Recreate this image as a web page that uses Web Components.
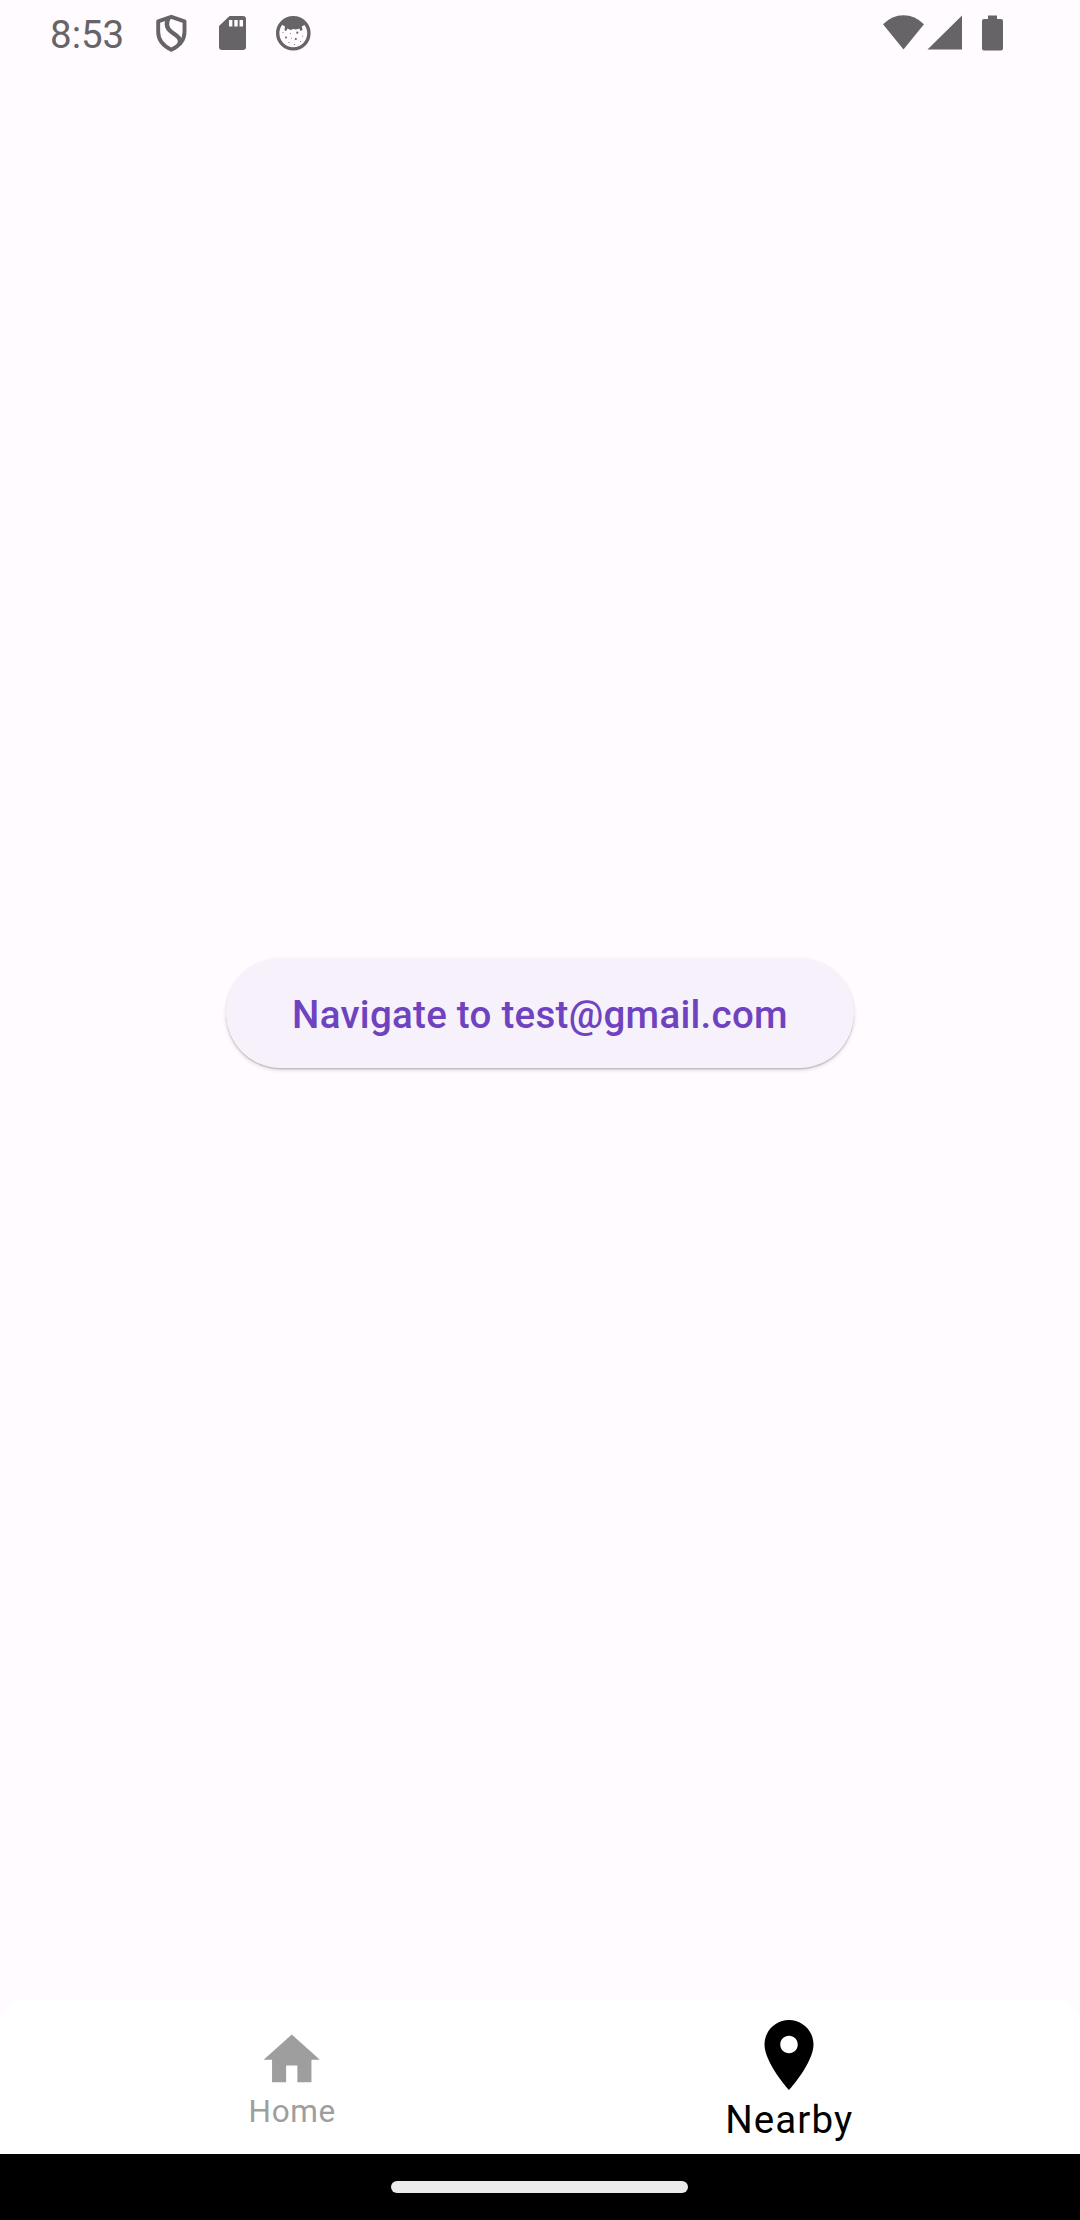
<!DOCTYPE html>
<html lang="en">
<head>
<meta charset="utf-8">
<title>Nearby</title>
<style>
html,body{margin:0;height:2220px;background:#fffbff}
body{font-family:Roboto,"Liberation Sans",sans-serif}
</style>
</head>
<body>
<app-screen>
  <status-bar slot="top">8:53</status-bar>
  <pill-button>Navigate to test@gmail.com</pill-button>
  <nav-bar slot="bottom">
    <nav-item icon="home">Home</nav-item>
    <nav-item icon="pin" active>Nearby</nav-item>
  </nav-bar>
  <gesture-bar slot="bottom"></gesture-bar>
</app-screen>
<script>
function define(name, html) {
  customElements.define(name, class extends HTMLElement {
    constructor() {
      super();
      this.attachShadow({mode: 'open'}).innerHTML = html;
    }
  });
}

define('app-screen', `
<style>
:host{display:flex;flex-direction:column;width:1080px;height:2220px;background:#fffbff;overflow:hidden}
main{flex:1;display:flex;justify-content:center;align-items:flex-start;padding-top:892px}
</style>
<slot name="top"></slot><main><slot></slot></main><slot name="bottom"></slot>`);

define('status-bar', `
<style>
:host{display:flex;height:66px;box-sizing:border-box;color:#676468;font-size:38.5px;line-height:70px}
.time{margin-left:50px;width:105px;white-space:nowrap}
svg{display:block;flex:none}
.end{margin-left:auto}
</style>
<span class="time"><slot></slot></span>
<svg width="165" height="66" viewBox="155 0 165 66" fill="#676468">
  <path d="M171.300 16.800L184.500 21.300V32C184.500 40 179 46 171.300 49.700C163.600 46 158.200 40 158.200 32V21.300Z" fill="none" stroke="#676468" stroke-width="3.900" stroke-linejoin="round"/>
  <path d="M168.500 18C165.500 24 166.500 28.500 171.500 32C178 36.500 181.500 38.500 179.500 44.500" fill="none" stroke="#676468" stroke-width="4.300"/>
  <path fill-rule="evenodd" d="M229.500 16H243Q246 16 246 19V47Q246 50 243 50H222Q219 50 219 47V26ZM229 20V26.500H232.400V20ZM234.300 20V26.500H237.700V20ZM239.500 20V26.500H243V20Z"/>
  <circle cx="293.300" cy="33.300" r="15.600" fill="#fffbff" stroke="#676468" stroke-width="3.400"/>
  <path d="M281 24Q286 17.500 293.300 17.500T306 24L301.800 26.500L302.500 30L300.500 31L299.300 28.500L296 29.500L293.300 29L290.500 30L287.500 28.500L286 31.200L284.500 30L285 26.500Z"/>
  <g><circle cx="286" cy="37.500" r="1"/><circle cx="297.300" cy="32.700" r="1.100"/><circle cx="295.800" cy="39" r="1.100"/><circle cx="290.500" cy="33.500" r=".5"/><circle cx="302.500" cy="36" r=".5"/><circle cx="291.500" cy="38" r=".5"/><circle cx="289" cy="42.500" r=".6"/><circle cx="300.500" cy="41.500" r=".5"/><circle cx="294.500" cy="44.500" r=".6"/><circle cx="283" cy="32.500" r=".5"/></g>
</svg>
<svg class="end" width="200" height="66" viewBox="880 0 200 66" fill="#676468">
  <path d="M883 24.300Q892 15.300 903.500 15.300T924 24.300L903.500 49.500Z"/>
  <path d="M927.500 49.500L962 15.500V49.500Z"/>
  <path d="M988 15.500H997V19H1001Q1003 19 1003 21V48.500Q1003 50.500 1001 50.500H984Q982 50.500 982 48.500V21Q982 19 984 19H988Z"/>
</svg>`);

define('pill-button', `
<style>
:host{display:block}
button{display:flex;align-items:center;justify-content:center;box-sizing:border-box;width:628px;height:110px;padding:3px 0 0;border:0;border-radius:55px;background:#f6f1fb;color:#6f43c0;font:500 38.5px/50px Roboto,sans-serif;letter-spacing:.275px;white-space:nowrap;box-shadow:0 1.500px 1px rgba(0,0,0,.15),0 2px 4px rgba(0,0,0,.14)}
</style>
<button><slot></slot></button>`);

define('nav-bar', `
<style>
:host{display:flex;box-sizing:border-box;height:155px;padding:0 43px;background:#fff;border-radius:27px 27px 0 0}
</style>
<slot></slot>`);

class NavItem extends HTMLElement {
  constructor() {
    super();
    const paths = {
      home: 'M10 20v-6h4v6h5v-8h3L12 3 2 12h3v8z',
      pin: 'M12 2C8.130 2 5 5.130 5 9c0 5.250 7 13 7 13s7-7.750 7-13c0-3.870-3.130-7-7-7zm0 9.500c-1.380 0-2.500-1.120-2.500-2.500s1.120-2.500 2.500-2.500 2.500 1.120 2.500 2.500-1.120 2.500-2.500 2.500z'
    };
    this.attachShadow({mode: 'open'}).innerHTML = `
<style>
:host{flex:1;display:flex;flex-direction:column;align-items:center;box-sizing:border-box;padding-top:27px;color:#9e9e9e;font-size:31.500px;line-height:38px;letter-spacing:.650px}
:host([active]){padding-top:13.500px;color:#000;font-size:38.500px;line-height:48px;letter-spacing:1.100px}
svg{display:block;width:67.500px;height:67.500px;fill:currentColor}
:host([active]) svg{width:84px;height:84px}
span{margin-top:-1px;padding-left:1.500px}
</style>
<svg viewBox="0 0 24 24"><path d="${paths[this.getAttribute('icon')]}"/></svg>
<span><slot></slot></span>`;
  }
}
customElements.define('nav-item', NavItem);

define('gesture-bar', `
<style>
:host{display:flex;justify-content:center;box-sizing:border-box;height:66px;padding-top:27px;background:#000}
i{display:block;width:297px;height:12px;margin-right:1px;border-radius:6px;background:#ebebeb}
</style><i></i>`);
</script>
</body>
</html>
